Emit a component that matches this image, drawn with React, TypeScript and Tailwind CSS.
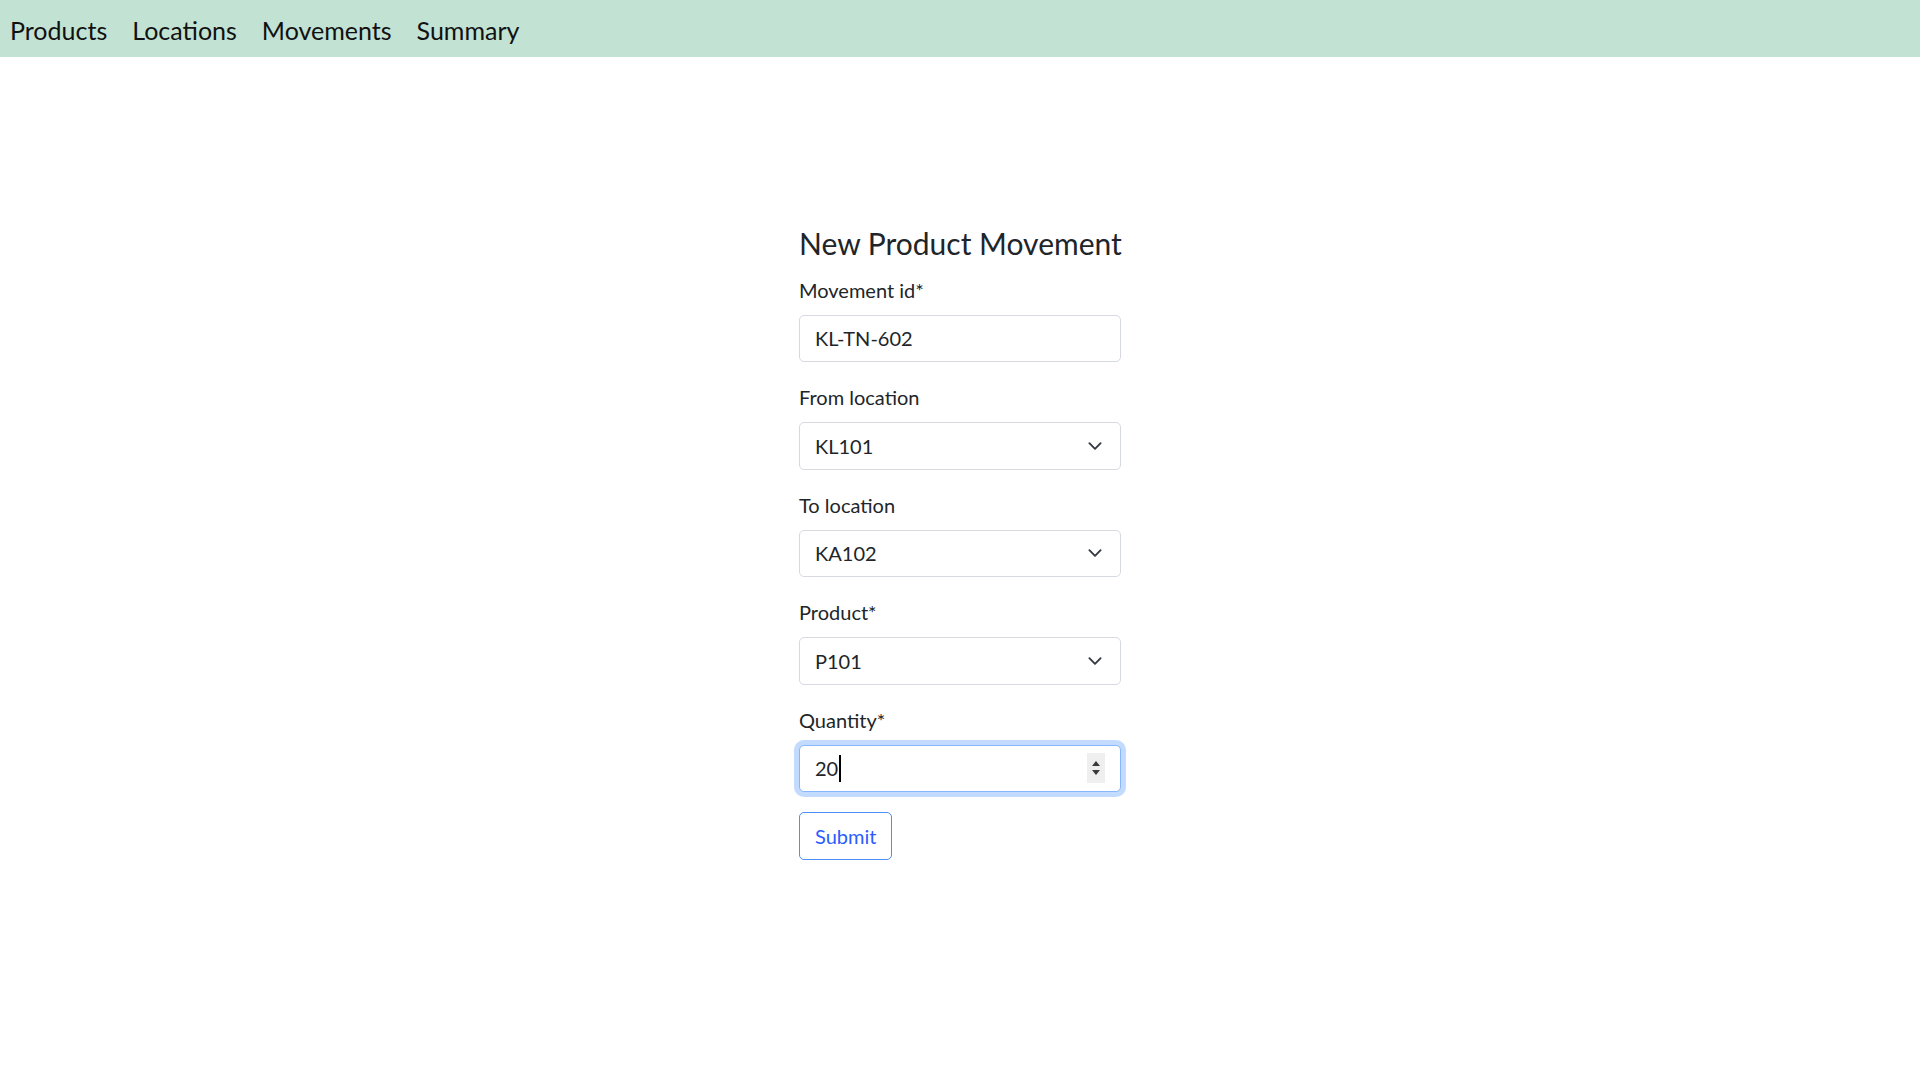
import React from "react";

const font = { fontFamily: 'Lato, "Noto Sans", sans-serif' };

function Chevron() {
  return (
    <svg
      className="absolute right-[15px] top-1/2 -translate-y-1/2"
      width="20"
      height="15"
      viewBox="0 0 16 16"
    >
      <path
        d="m2 5 6 6 6-6"
        fill="none"
        stroke="#343a40"
        strokeWidth="2"
        strokeLinecap="round"
        strokeLinejoin="round"
      />
    </svg>
  );
}

function Label({ children }: { children: React.ReactNode }) {
  return (
    <div className="text-[20px] leading-[30px] mb-[10px] text-[#212529]">{children}</div>
  );
}

function TextBox({ value }: { value: string }) {
  return (
    <div className="h-[47.5px] w-full rounded-[5px] border-[1.25px] border-[#d6dadf] bg-white px-[15px] flex items-center text-[20px] text-[#212529]">
      {value}
    </div>
  );
}

function SelectBox({ value }: { value: string }) {
  return (
    <div className="relative h-[47.5px] w-full rounded-[5px] border-[1.25px] border-[#d6dadf] bg-white px-[15px] flex items-center text-[20px] text-[#212529]">
      {value}
      <Chevron />
    </div>
  );
}

export default function App() {
  return (
    <div className="min-h-screen bg-white" style={font}>
      <nav className="h-[57px] bg-[#c2e2d4] flex items-center pl-[10px] pt-[5px] gap-[25px] text-[25px] leading-[37.5px] text-[#111]">
        <span>Products</span>
        <span>Locations</span>
        <span>Movements</span>
        <span>Summary</span>
      </nav>
      <div className="w-[322px] mx-auto pt-[168px]">
        <h4 className="text-[30px] leading-[37.5px] text-[#212529] mb-[12px] whitespace-nowrap">
          New Product Movement
        </h4>
        <div className="mb-[20px]">
          <Label>Movement id*</Label>
          <TextBox value="KL-TN-602" />
        </div>
        <div className="mb-[20px]">
          <Label>From location</Label>
          <SelectBox value="KL101" />
        </div>
        <div className="mb-[20px]">
          <Label>To location</Label>
          <SelectBox value="KA102" />
        </div>
        <div className="mb-[20px]">
          <Label>Product*</Label>
          <SelectBox value="P101" />
        </div>
        <div className="mb-[20px]">
          <Label>Quantity*</Label>
          <div className="relative h-[47.5px] w-full rounded-[5px] border-[1.25px] border-[#86b7fe] shadow-[0_0_0_5px_rgba(13,110,253,0.25)] bg-white px-[15px] flex items-center text-[20px] text-[#212529]">
            <span>20</span>
            <span className="inline-block w-[1.5px] h-[27px] bg-black ml-[1px]" />
            <div className="absolute right-[15px] top-1/2 -translate-y-1/2 w-[18px] h-[30px] bg-[#efefef] flex flex-col items-center justify-center gap-[4px]">
              <svg width="8" height="5" viewBox="0 0 8 5">
                <path d="M0 5 L4 0 L8 5 Z" fill="#3a3a3a" />
              </svg>
              <svg width="8" height="5" viewBox="0 0 8 5">
                <path d="M0 0 L4 5 L8 0 Z" fill="#3a3a3a" />
              </svg>
            </div>
          </div>
        </div>
        <button className="h-[47.5px] px-[15px] rounded-[5px] border-[1.25px] border-[#4d8ffd] text-[#2a5cff] text-[20px] bg-white">
          Submit
        </button>
      </div>
    </div>
  );
}
